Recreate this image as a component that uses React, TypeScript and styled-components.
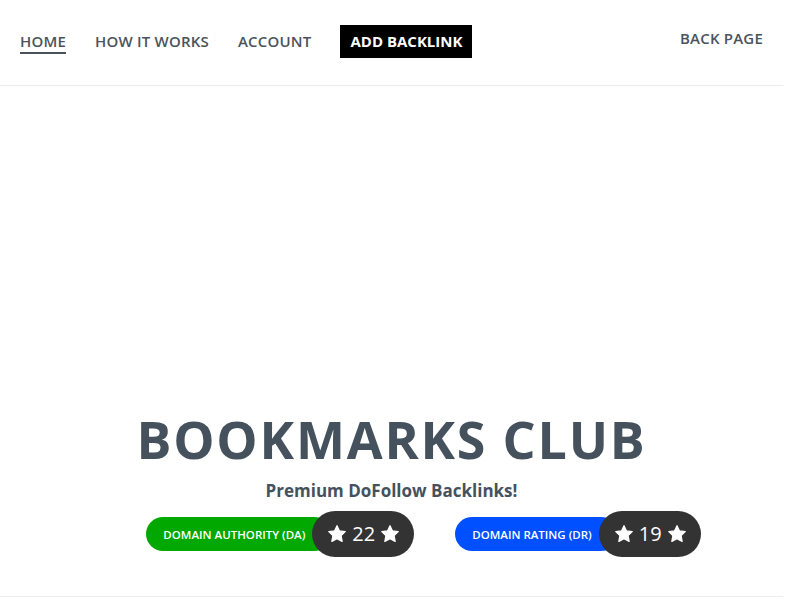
import React from 'react';
import styled, { createGlobalStyle } from 'styled-components';

const GlobalStyle = createGlobalStyle`
    html, body {
        margin: 0;
        padding: 0;
        background: #ffffff;
    }
    body {
        font-family: "Open Sans", "Liberation Sans", sans-serif;
        color: #45525e;
    }
`;

// the reference leaves a 17px scrollbar gutter on the right
const Page = styled.div`
    width: 783px;
    min-height: 10300px;
    display: flex;
    flex-direction: column;
`;

const Header = styled.header`
    display: flex;
    align-items: flex-start;
    justify-content: space-between;
    height: 85px;
    padding: 0 20px;
    border-bottom: 1px solid #ececec;
`;

const NavList = styled.nav`
    display: flex;
    align-items: center;
    gap: 29px;
    height: 85px;
    padding-bottom: 3px;
    box-sizing: border-box;
`;

const NavLink = styled.a<{ $active?: boolean }>`
    position: relative;
    font-family: "Open Sans", "Liberation Sans", sans-serif;
    font-size: 15px;
    font-weight: 600;
    letter-spacing: 0.2px;
    color: #4a535c;
    text-decoration: none;
    text-transform: uppercase;
    line-height: 20px;

    &::after {
        content: '';
        display: ${props => (props.$active ? 'block' : 'none')};
        position: absolute;
        left: 0;
        right: 0;
        bottom: -3px;
        height: 2px;
        background: #4a535c;
    }
`;

const CtaButton = styled.a`
    display: flex;
    align-items: center;
    justify-content: center;
    height: 33px;
    padding: 0 10px;
    background: #000000;
    color: #ffffff;
    font-family: "Open Sans", "Liberation Sans", sans-serif;
    font-weight: 700;
    font-size: 15px;
    text-decoration: none;
    text-transform: uppercase;
`;

const BackLink = styled(NavLink)`
    margin-top: 28px;
`;

const Hero = styled.section`
    display: flex;
    flex-direction: column;
    align-items: center;
    padding-top: 324px;
    height: 511px;
    box-sizing: border-box;
    border-bottom: 1px solid #ececec;
`;

const Title = styled.h1`
    margin: 0;
    font-family: "Open Sans", "Liberation Sans", sans-serif;
    font-weight: 700;
    font-size: 52px;
    line-height: 58px;
    letter-spacing: 1.8px;
    color: #45525e;
`;

const Subtitle = styled.p`
    margin: 13px 0 0;
    font-family: "Open Sans", "Liberation Sans", sans-serif;
    font-weight: 700;
    font-size: 17px;
    line-height: 20px;
    color: #45525e;
`;

const BadgeRow = styled.div`
    display: flex;
    align-items: center;
    gap: 41px;
    margin-top: 10px;
    padding-left: 64px;
`;

const Badge = styled.div`
    display: flex;
    align-items: center;
`;

const BadgeLabel = styled.span<{ color: string }>`
    display: flex;
    align-items: center;
    height: 34px;
    padding: 0 26px 0 17px;
    border-radius: 17px;
    background: ${props => props.color};
    color: #ffffff;
    font-family: "Open Sans", "Liberation Sans", sans-serif;
    font-size: 11.5px;
    font-weight: 600;
    text-transform: uppercase;
    white-space: nowrap;
`;

const Score = styled.span`
    display: flex;
    align-items: center;
    gap: 5px;
    height: 46px;
    margin-left: -19px;
    padding: 0 14px 0 15px;
    border-radius: 23px;
    background: #333333;
    color: #ffffff;
    font-family: "Open Sans", "Liberation Sans", sans-serif;
    font-size: 20px;
    line-height: 1;
`;

const Star = () => (
    <svg width="20" height="20" viewBox="0 0 24 24" fill="#ffffff" stroke="#ffffff" strokeWidth="1.5" strokeLinejoin="round">
        <path d="M12 2l3 6.3 6.9.9-5 4.8 1.3 6.9L12 17.6l-6.2 3.3 1.3-6.9-5-4.8 6.9-.9z" />
    </svg>
);

const Rest = styled.section`
    flex: 1;
`;

const App = () => {
    return (
        <Page>
            <GlobalStyle />
            <Header>
                <NavList>
                    <NavLink href="#" $active>Home</NavLink>
                    <NavLink href="#">How it works</NavLink>
                    <NavLink href="#">Account</NavLink>
                    <CtaButton href="#">Add backlink</CtaButton>
                </NavList>
                <BackLink href="#">Back page</BackLink>
            </Header>
            <Hero>
                <Title>BOOKMARKS CLUB</Title>
                <Subtitle>Premium DoFollow Backlinks!</Subtitle>
                <BadgeRow>
                    <Badge>
                        <BadgeLabel color="#00a800">Domain Authority (DA)</BadgeLabel>
                        <Score><Star />22<Star /></Score>
                    </Badge>
                    <Badge>
                        <BadgeLabel color="#0050ff">Domain Rating (DR)</BadgeLabel>
                        <Score><Star />19<Star /></Score>
                    </Badge>
                </BadgeRow>
            </Hero>
            <Rest />
        </Page>
    );
};

export default App;
